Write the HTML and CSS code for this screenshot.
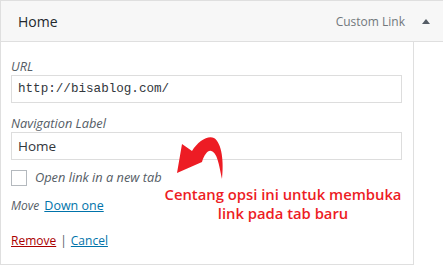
FILE: index.html
```html
<!DOCTYPE html>
<html>
<head>
<meta charset="utf-8">
<link rel="stylesheet" href="styles.css">
</head>
<body>
<div class="item">
  <div class="item-bar">
    <span class="item-title">Home</span>
    <span class="item-controls">
      <span class="item-type">Custom Link</span>
      <span class="arrow"></span>
    </span>
  </div>
  <div class="settings">
    <label class="field">
      <span class="lbl">URL</span>
      <input class="txt mono" type="text" value="http://bisablog.com/">
    </label>
    <label class="field">
      <span class="lbl">Navigation Label</span>
      <input class="txt" type="text" value="Home">
    </label>
    <label class="check">
      <span class="box"></span>
      <span class="lbl">Open link in a new tab</span>
    </label>
    <div class="move">
      <span class="lbl">Move</span>
      <a class="link" href="#">Down one</a>
    </div>
    <div class="actions">
      <a class="remove" href="#">Remove</a>
      <span class="sep">|</span>
      <a class="link" href="#">Cancel</a>
    </div>
    <svg class="callout-arrow" width="60" height="52" viewBox="0 0 60 52">
      <path d="M7,41 L12,12 L22,19 C28,9 38,3 44,6 C52,11 54,30 52,47 C49,32 47,20 41,19 C38,18 34,23 32,30 Z" fill="#ed1c24"/>
    </svg>
    <div class="callout">Centang opsi ini untuk membuka<br>link pada tab baru</div>
  </div>
</div>
</body>
</html>
```

FILE: styles.css
```css
html, body {
  margin: 0;
  padding: 0;
  background: #fff;
}
body {
  font-family: "Open Sans", "Noto Sans", sans-serif;
  width: 443px;
  height: 267px;
  overflow: hidden;
}
.item {
  width: 443px;
}
.item-bar {
  box-sizing: border-box;
  height: 42px;
  border: 1px solid #dfdfdf;
  border-right: 0;
  background: #f7f7f7;
  display: flex;
  align-items: center;
  justify-content: space-between;
  padding: 0 13px 0 17px;
}
.item-title {
  font-size: 14px;
  font-weight: 400;
  color: #23282d;
}
.item-controls {
  display: flex;
  align-items: center;
  gap: 17px;
}
.item-type {
  font-size: 12px;
  color: #72777c;
}
.arrow {
  width: 0;
  height: 0;
  border-left: 4px solid transparent;
  border-right: 4px solid transparent;
  border-bottom: 5px solid #555d66;
}
.settings {
  position: relative;
  box-sizing: border-box;
  width: 414px;
  height: 223px;
  border: 1px solid #dfdfdf;
  border-top: 0;
  padding: 16px 11px 0 10px;
}
.field {
  display: flex;
  flex-direction: column;
  margin-bottom: 12px;
}
.lbl {
  font-style: italic;
  font-size: 12.8px;
  color: #555d66;
  line-height: 17px;
}
.txt {
  box-sizing: border-box;
  width: 391px;
  height: 28px;
  margin: 0;
  border: 1px solid #ddd;
  padding: 0 6px;
  font-family: "Open Sans", sans-serif;
  font-size: 13.5px;
  color: #32373c;
  outline: none;
}
.mono {
  font-family: "Liberation Mono", monospace;
  font-size: 12.6px;
}
.check {
  display: flex;
  align-items: center;
  gap: 8px;
  margin-top: -3px;
}
.box {
  box-sizing: border-box;
  width: 16px;
  height: 16px;
  border: 1px solid #b4b9be;
  background: #fff;
}
.move {
  display: flex;
  gap: 5px;
  margin-top: 11px;
  align-items: baseline;
}
.move .lbl {
  font-size: 12px;
}
.link {
  font-size: 12.5px;
  color: #0073aa;
  text-decoration: underline;
}
.actions {
  margin-top: 18px;
  display: flex;
  gap: 4px;
  font-size: 12px;
  align-items: baseline;
}
.actions .link {
  font-size: 12px;
}
.remove {
  color: #a00;
  text-decoration: underline;
}
.sep {
  color: #555d66;
}
.callout-arrow {
  position: absolute;
  left: 169px;
  top: 90px;
}
.callout {
  position: absolute;
  left: 149px;
  top: 143px;
  width: 266px;
  text-align: center;
  color: #ed1c24;
  font-size: 14.8px;
  font-weight: 600;
  line-height: 19px;
}
```
